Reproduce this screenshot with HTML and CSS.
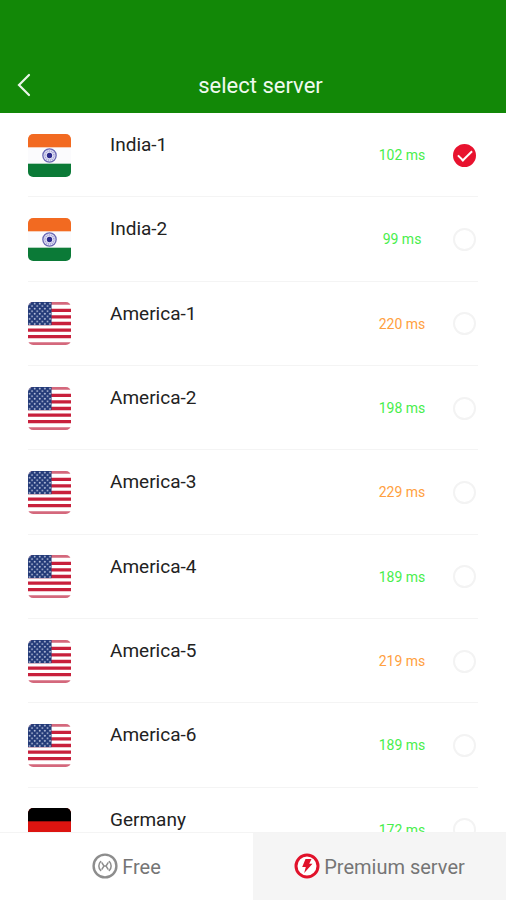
FILE: index.html
```html
<!DOCTYPE html>
<html lang="en">
<head>
<meta charset="utf-8">
<meta name="viewport" content="width=device-width, initial-scale=1">
<title>select server</title>
<link rel="stylesheet" href="styles.css">
</head>
<body>
<svg class="defs" aria-hidden="true">
  <defs>
    <clipPath id="round"><rect width="42" height="42" rx="5"/></clipPath>
    <pattern id="stars" width="5" height="5" patternUnits="userSpaceOnUse">
      <circle cx="1.5" cy="1.5" r=".9" fill="#b9c2dc"/>
      <circle cx="4" cy="4" r=".9" fill="#b9c2dc"/>
    </pattern>
    <symbol id="india" viewBox="0 0 42 42">
      <g clip-path="url(#round)">
        <rect width="42" height="42" fill="#fbfbfd"/>
        <rect width="42" height="13" fill="#f26a21"/>
        <rect y="29" width="42" height="13" fill="#0b7a37"/>
        <circle cx="21" cy="21" r="6.5" fill="#e4e4f5" stroke="#6a69b4" stroke-width="1.3"/>
        <circle cx="21" cy="21" r="4.4" fill="none" stroke="#a3a2d4" stroke-width="1.6" stroke-dasharray="1 .8"/>
        <circle cx="21" cy="21" r="2.6" fill="#2b2a8c"/>
      </g>
    </symbol>
    <symbol id="america" viewBox="0 0 42 42">
      <g clip-path="url(#round)">
        <rect width="42" height="42" fill="#fff"/>
        <path d="M0 8.1h42M0 14.5h42M0 21h42M0 27.5h42M0 33.9h42" stroke="#c8203c" stroke-width="3.2"/>
        <path d="M0 1.3h42M0 40.7h42" stroke="#d4687c" stroke-width="2.6"/>
        <rect width="23" height="22.6" fill="#233a78"/>
        <rect width="23" height="22.6" fill="url(#stars)"/>
      </g>
    </symbol>
    <symbol id="germany" viewBox="0 0 42 42">
      <g clip-path="url(#round)">
        <rect width="42" height="42" fill="#dc1410"/>
        <rect width="42" height="13" fill="#000"/>
        <rect y="29" width="42" height="13" fill="#ffce00"/>
      </g>
    </symbol>
  </defs>
</svg>

<header class="bar">
  <button class="back" type="button" aria-label="Back">
    <svg width="16" height="24" viewBox="0 0 16 24" fill="none" stroke="#e9f6e8" stroke-width="2.2" stroke-linecap="round"><path d="M13 2 3 12l10 10"/></svg>
  </button>
  <h1 class="title">select server</h1>
</header>

<main class="scroller">
  <ul class="servers">
    <li class="row"><label class="server"><svg class="flag"><use href="#india"/></svg><span class="name">India-1</span><span class="ping">102 ms</span><input class="pick" type="radio" name="server" checked></label></li>
    <li class="row"><label class="server"><svg class="flag"><use href="#india"/></svg><span class="name">India-2</span><span class="ping">99 ms</span><input class="pick" type="radio" name="server"></label></li>
    <li class="row"><label class="server"><svg class="flag"><use href="#america"/></svg><span class="name">America-1</span><span class="ping slow">220 ms</span><input class="pick" type="radio" name="server"></label></li>
    <li class="row"><label class="server"><svg class="flag"><use href="#america"/></svg><span class="name">America-2</span><span class="ping">198 ms</span><input class="pick" type="radio" name="server"></label></li>
    <li class="row"><label class="server"><svg class="flag"><use href="#america"/></svg><span class="name">America-3</span><span class="ping slow">229 ms</span><input class="pick" type="radio" name="server"></label></li>
    <li class="row"><label class="server"><svg class="flag"><use href="#america"/></svg><span class="name">America-4</span><span class="ping">189 ms</span><input class="pick" type="radio" name="server"></label></li>
    <li class="row"><label class="server"><svg class="flag"><use href="#america"/></svg><span class="name">America-5</span><span class="ping slow">219 ms</span><input class="pick" type="radio" name="server"></label></li>
    <li class="row"><label class="server"><svg class="flag"><use href="#america"/></svg><span class="name">America-6</span><span class="ping">189 ms</span><input class="pick" type="radio" name="server"></label></li>
    <li class="row"><label class="server"><svg class="flag"><use href="#germany"/></svg><span class="name">Germany</span><span class="ping">172 ms</span><input class="pick" type="radio" name="server"></label></li>
  </ul>
</main>

<nav class="tabs">
  <button class="tab" type="button">
    <svg width="26" height="26" viewBox="0 0 26 26" fill="none" stroke="#8d8d8d">
      <circle cx="13" cy="13" r="11.4" stroke-width="2.4"/>
      <g stroke-width="1.5" stroke-linecap="round">
        <path d="M8.7 8.5a6.4 6.4 0 0 0 0 9M17.3 8.5a6.4 6.4 0 0 1 0 9M10 9.8 12 13l-2 3.2M16 9.8 14 13l2 3.2M12 13h2"/>
      </g>
    </svg>
    <span class="caption">Free</span>
  </button>
  <button class="tab premium" type="button">
    <svg width="26" height="26" viewBox="0 0 26 26">
      <circle cx="13" cy="13" r="11" fill="#fff" stroke="#e1122b" stroke-width="3"/>
      <path d="M11.5 6h6l-2.3 4.8h3.3L10.2 20l1.6-6H8.2z" fill="#e1122b"/>
    </svg>
    <span class="caption">Premium server</span>
  </button>
</nav>
</body>
</html>
```
FILE: styles.css
```css
* {
  box-sizing: border-box;
}

body {
  display: flex;
  flex-direction: column;
  height: 100vh;
  margin: 0;
  background: #fff;
  color: #222;
  font-family: Roboto, "Liberation Sans", sans-serif;
}

button {
  border: 0;
  background: none;
  color: inherit;
  font: inherit;
}

.defs {
  position: absolute;
  width: 0;
  height: 0;
}

.bar {
  display: flex;
  align-items: center;
  flex: none;
  padding: 57px 33px 0 0;
  background: #128807;
  color: #f0faef;
}

.back {
  display: flex;
  width: 48px;
  padding: 16px;
}

.title {
  flex: 1;
  margin: 0;
  padding-top: 2px;
  font-size: 22px;
  font-weight: 400;
  line-height: 54px;
  text-align: center;
}

.scroller {
  flex: 1;
  min-height: 0;
  overflow-y: auto;
  scrollbar-width: none;
}

.servers {
  display: grid;
  grid-auto-rows: 1fr;
  min-height: 759px;
  margin: 0;
  padding: 0 28px;
  list-style: none;
}

.row {
  border-bottom: 1px solid #f4f4f4;
}

.server {
  display: flex;
  align-items: center;
  height: 100%;
  padding-top: 1px;
}

.flag {
  flex: none;
  width: 43px;
  height: 43px;
}

.name {
  flex: 1;
  align-self: flex-start;
  padding: 19px 0 0 39px;
  font-size: 19px;
  line-height: 24px;
}

.ping {
  width: 76px;
  color: #48ee4c;
  font-size: 14px;
  line-height: 20px;
  text-align: center;
}

.slow {
  color: #ffa040;
}

.pick {
  appearance: none;
  width: 23px;
  height: 23px;
  margin: 0 2px 0 13px;
  border: 2px solid #f3f3f3;
  border-radius: 50%;
}

.pick:checked {
  display: grid;
  place-items: center;
  border-color: #e8132f;
  background: #e8132f;
}

.pick:checked::before {
  content: "";
  width: 12px;
  height: 6px;
  margin-bottom: 3px;
  border: solid #fff;
  border-width: 0 0 2px 2px;
  transform: rotate(-45deg);
}

.tabs {
  display: grid;
  grid-template-columns: 1fr 1fr;
  flex: none;
  color: #757575;
  font-size: 20px;
  line-height: 28px;
}

.tab {
  display: flex;
  align-items: center;
  justify-content: center;
  gap: 4px;
  padding: 18px 0 19px;
  border-top: 1px solid #f4f4f4;
}

.caption {
  padding-top: 2px;
}

.premium {
  background: #f5f5f5;
}
```
